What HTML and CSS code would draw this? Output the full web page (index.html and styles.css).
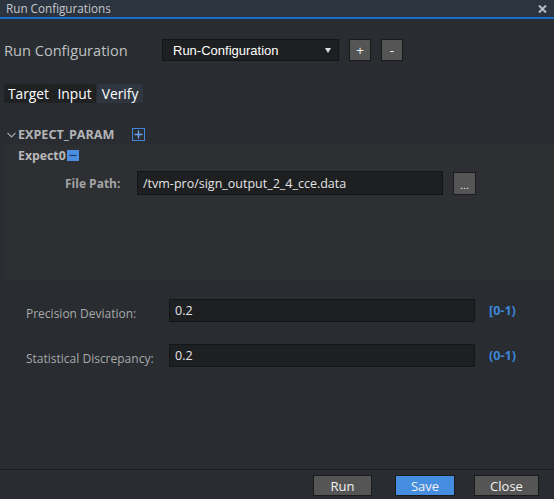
FILE: index.html
```html
<!DOCTYPE html>
<html>
<head>
<meta charset="utf-8">
<title>Run Configurations</title>
<link rel="stylesheet" href="styles.css">
</head>
<body>
<div class="window">
  <div class="titlebar">
    <span class="title">Run Configurations</span>
    <svg class="close" width="9" height="8" viewBox="0 0 9 8"><path d="M1 0.5 L8 7.5 M8 0.5 L1 7.5" stroke="#b9bcc0" stroke-width="2"/></svg>
  </div>
  <div class="content">
    <div class="config-row">
      <span class="config-label">Run Configuration</span>
      <div class="select">
        <span class="select-text">Run-Configuration</span>
        <svg class="caret" width="6" height="5" viewBox="0 0 6 5"><path d="M0 0 H6 L3 5 Z" fill="#e0e0e0"/></svg>
      </div>
      <button class="sq-btn">+</button>
      <button class="sq-btn">-</button>
    </div>
    <div class="tabs">
      <div class="tab tab-target">Target</div>
      <div class="tab tab-input">Input</div>
      <div class="tab tab-verify active">Verify</div>
    </div>
    <div class="section-head">
      <svg class="chevron" width="9" height="6" viewBox="0 0 9 6"><path d="M0.5 0.8 L4.5 5 L8.5 0.8" fill="none" stroke="#a9abae" stroke-width="1.2"/></svg>
      <span class="section-title">EXPECT_PARAM</span>
      <svg class="plus-icon" width="13" height="13" viewBox="0 0 13 13"><rect x="0.5" y="0.5" width="12" height="12" fill="none" stroke="#3f86d8"/><path d="M6.5 2.5 V10.5 M2.5 6.5 H10.5" stroke="#6aa6ee" stroke-width="1.4"/></svg>
    </div>
    <div class="panel">
      <div class="expect-head">
        <span class="expect-title">Expect0</span>
        <svg class="minus-icon" width="12" height="11" viewBox="0 0 12 11"><rect width="12" height="11" fill="#4a8fe2"/><path d="M2.5 5.5 H9.5" stroke="#1d3553" stroke-width="1.2"/></svg>
      </div>
      <div class="file-row">
        <span class="file-label">File Path:</span>
        <div class="input file-input">/tvm-pro/sign_output_2_4_cce.data</div>
        <button class="browse">...</button>
      </div>
    </div>
    <div class="param-row precision">
      <span class="param-label">Precision Deviation:</span>
      <div class="input param-input">0.2</div>
      <span class="range">[0-1)</span>
    </div>
    <div class="param-row statistical">
      <span class="param-label">Statistical Discrepancy:</span>
      <div class="input param-input">0.2</div>
      <span class="range">(0-1)</span>
    </div>
  </div>
  <div class="footer">
    <button class="btn btn-run">Run</button>
    <button class="btn btn-save">Save</button>
    <button class="btn btn-close">Close</button>
  </div>
</div>
</body>
</html>
```

FILE: styles.css
```css
* { box-sizing: border-box; }
html, body {
  margin: 0;
  padding: 0;
  background: #292c30;
}
body {
  width: 554px;
  height: 499px;
  overflow: hidden;
  font-family: "Open Sans", "Noto Sans", sans-serif;
  color: #c0c0c0;
}
.window {
  display: flex;
  flex-direction: column;
  height: 499px;
}
.titlebar {
  height: 19px;
  flex: none;
  background: #2c3440;
  border-bottom: 2px solid #1b6fcc;
  display: flex;
  align-items: center;
  justify-content: space-between;
  padding: 0 7px 0 6px;
}
.title {
  font-size: 11.7px;
  color: #c6c8cb;
  line-height: 17px;
}
.close { display: block; }
.content {
  flex: 1;
  display: flex;
  flex-direction: column;
}
.config-row {
  margin-top: 20px;
  height: 22px;
  display: flex;
  align-items: center;
}
.config-label {
  width: 162px;
  padding-left: 4px;
  font-size: 14.6px;
  color: #bfc0c2;
}
.select {
  width: 177px;
  height: 22px;
  background: #1e1f21;
  border: 1px solid #141517;
  display: flex;
  align-items: center;
  justify-content: space-between;
  padding: 0 7px 0 10px;
}
.select-text {
  font-family: "Liberation Sans", Arial, sans-serif;
  font-size: 13px;
  color: #ffffff;
}
.caret { display: block; }
.sq-btn {
  margin-left: 10px;
  width: 22px;
  height: 22px;
  background: #555555;
  border: 1px solid #1b1b1c;
  color: #f0f0f0;
  font-family: "Liberation Sans", Arial, sans-serif;
  font-size: 13px;
  padding: 0;
  display: flex;
  align-items: center;
  justify-content: center;
}
.tabs {
  margin-top: 23px;
  height: 19px;
  display: flex;
  padding-left: 4px;
}
.tab {
  height: 19px;
  display: flex;
  align-items: center;
  justify-content: center;
  font-size: 13.8px;
  color: #ffffff;
  background: #1f2123;
  border-radius: 3px 3px 0 0;
}
.tab-target { width: 49px; }
.tab-input { width: 43px; }
.tab-verify { width: 46px; margin-left: 1px; }
.tab.active { background: #30363f; }
.section-head {
  margin-top: 24px;
  height: 14px;
  display: flex;
  align-items: center;
  padding-left: 7px;
}
.chevron { display: block; margin-top: 1px; }
.section-title {
  margin-left: 2px;
  width: 114px;
  font-size: 12.6px;
  font-weight: 700;
  color: #b4b5b7;
}
.plus-icon { display: block; }
.panel {
  margin-top: 4px;
  margin-left: 4px;
  height: 134px;
  background: #2d2f32;
  display: flex;
  flex-direction: column;
}
.expect-head {
  margin-top: 3px;
  height: 14px;
  display: flex;
  align-items: center;
  padding-left: 14px;
}
.expect-title {
  font-size: 12.3px;
  font-weight: 700;
  color: #b8b9bb;
}
.minus-icon { display: block; margin-left: 1px; }
.file-row {
  margin-top: 9px;
  height: 24px;
  display: flex;
  align-items: center;
  padding-left: 61px;
}
.file-label {
  width: 72px;
  font-size: 12px;
  font-weight: 700;
  color: #a3a4a6;
}
.input {
  width: 306px;
  background: #1e1f21;
  border: 1px solid #141517;
  display: flex;
  align-items: center;
  padding-left: 5px;
  font-size: 12.5px;
  color: #e4e4e4;
}
.file-input { height: 24px; }
.browse {
  margin-left: 10px;
  width: 23px;
  height: 23px;
  background: #555555;
  border: 1px solid #1b1b1c;
  color: #f0f0f0;
  font-size: 11px;
  padding: 0 0 3px 0;
  display: flex;
  align-items: flex-end;
  justify-content: center;
  font-family: "Liberation Sans", Arial, sans-serif;
}
.param-row {
  height: 23px;
  display: flex;
  align-items: center;
  padding-left: 26px;
}
.precision { margin-top: 20px; }
.statistical { margin-top: 22px; }
.param-label {
  width: 143px;
  font-size: 12px;
  color: #a8a9ab;
  padding-top: 6px;
}
.param-input { height: 23px; }
.range {
  margin-left: 14px;
  font-size: 12.6px;
  font-weight: 700;
  color: #3d86da;
}
.footer {
  height: 30px;
  flex: none;
  border-top: 1px solid #1b1d1f;
  display: flex;
  justify-content: flex-end;
  align-items: flex-start;
  padding: 5px 15px 0 0;
}
.btn {
  height: 21px;
  border: 1px solid #1b1b1c;
  background: #555555;
  color: #f2f2f2;
  font-family: "Open Sans", sans-serif;
  font-size: 13px;
  padding: 0;
  display: flex;
  align-items: center;
  justify-content: center;
}
.btn-run { width: 59px; }
.btn-save { width: 60px; margin-left: 23px; background: #458ddf; }
.btn-close { width: 65px; margin-left: 19px; }
```
